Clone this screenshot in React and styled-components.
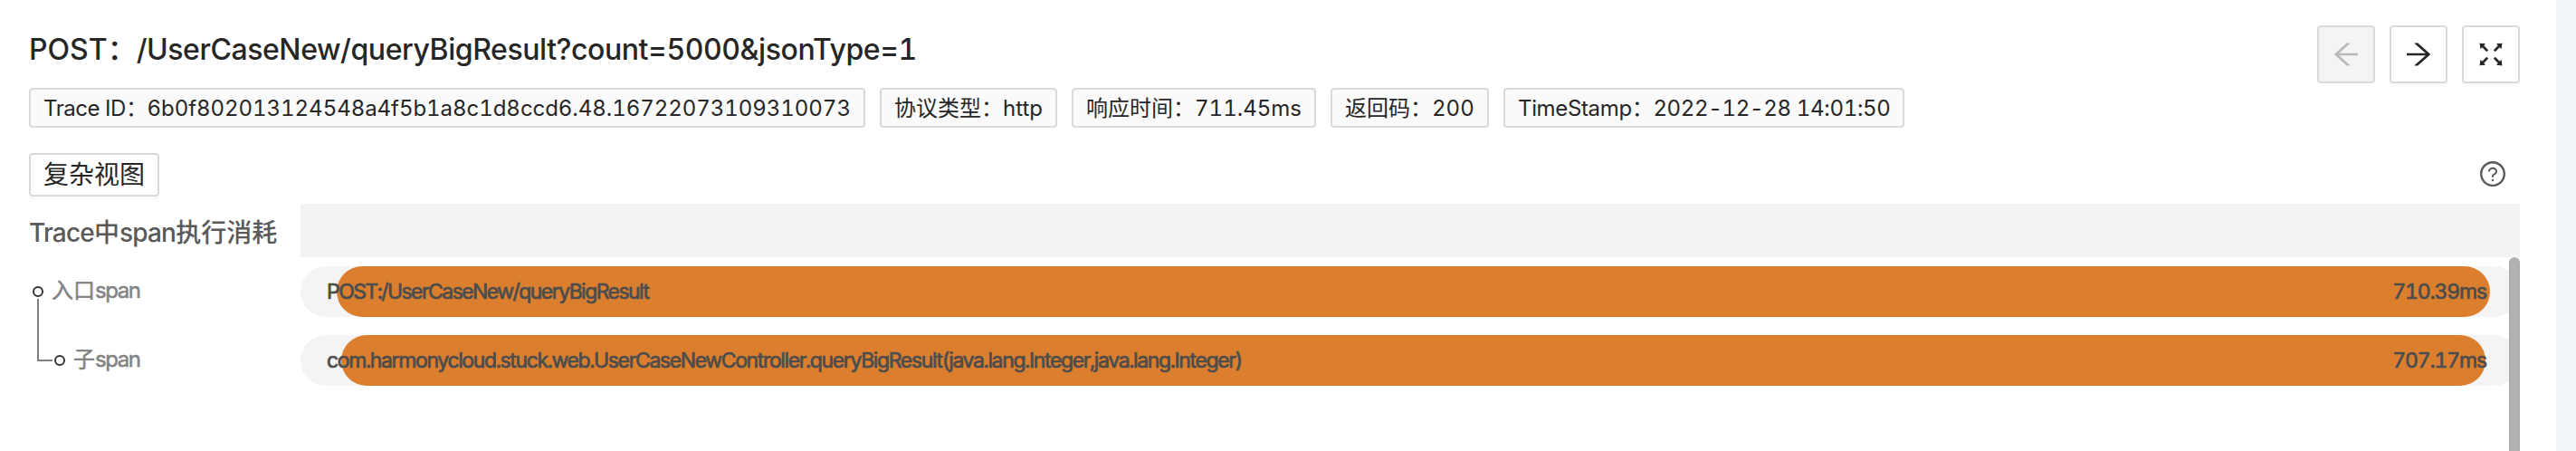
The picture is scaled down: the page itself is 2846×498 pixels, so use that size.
import React from 'react';
import styled, { createGlobalStyle } from 'styled-components';
import {
  AiOutlineArrowLeft,
  AiOutlineArrowRight,
  AiOutlineFullscreen,
  AiOutlineQuestionCircle,
} from 'react-icons/ai';

const GlobalStyle = createGlobalStyle`
  * { box-sizing: border-box; }
  body {
    margin: 0;
    background: #fff;
    color: #262626;
    font-family: Inter, "Noto Sans CJK SC", sans-serif;
    font-variant-numeric: tabular-nums;
  }
  button { font-family: inherit; color: inherit; }
`;

const Page = styled.div`
  display: flex;
  height: 498px;
  overflow: hidden;
  background: #f2f6fb;
  padding-right: 22px;
`;

const Panel = styled.main`
  flex: 1;
  min-width: 0;
  display: flex;
  flex-direction: column;
  background: #fff;
  padding: 28px 40px 0 32px;
`;

const Head = styled.header`
  display: flex;
  justify-content: space-between;
  align-items: flex-start;
  height: 113px;
`;

const Title = styled.h1`
  margin: 0 0 16px;
  font-size: 32px;
  line-height: 53px;
  font-weight: 500;
  white-space: nowrap;
`;

const Spaced = styled.span`
  letter-spacing: ${(p) => p.$tracking}px;
`;

const Tags = styled.div`
  display: flex;
  gap: 16px;
`;

const Tag = styled.div`
  height: 44px;
  width: ${(p) => p.$width}px;
  padding: 0 14px;
  border: 2px solid #d9d9d9;
  border-radius: 4px;
  background: #fafafa;
  font-size: 24px;
  line-height: 41px;
  white-space: nowrap;
`;

const Actions = styled.div`
  display: flex;
  gap: 16px;
`;

const IconButton = styled.button`
  display: flex;
  align-items: center;
  justify-content: center;
  width: 64px;
  height: 64px;
  padding: 0;
  border: 2px solid #d9d9d9;
  border-radius: 4px;
  background: #fff;
  box-shadow: 0 4px 0 rgba(0, 0, 0, 0.015);
  font-size: 36px;

  &:disabled {
    background: #f4f4f4;
    color: #b8b8b8;
    box-shadow: none;
  }
`;

const Toolbar = styled.div`
  display: flex;
  align-items: center;
  justify-content: space-between;
  margin-top: 28px;
  height: 48px;
  padding-right: 14px;
`;

const ViewButton = styled.button`
  width: 144px;
  height: 48px;
  padding: 1px 0 0;
  border: 2px solid #d9d9d9;
  border-radius: 4px;
  background: #fff;
  box-shadow: 0 4px 0 rgba(0, 0, 0, 0.015);
  font-size: 28px;
  line-height: 43px;
`;

const HelpIcon = styled(AiOutlineQuestionCircle)`
  width: 32px;
  height: 32px;
  margin-bottom: 2px;
  color: #595959;
`;

const TableHead = styled.div`
  display: grid;
  grid-template-columns: 300px 1fr;
  grid-template-rows: 59px;
  margin-top: 8px;
`;

const TreeHeading = styled.div`
  font-size: 28px;
  font-weight: 500;
  line-height: 65px;
  color: #595959;
  white-space: nowrap;
`;

const Ruler = styled.div`
  background: #f3f3f3;
`;

const TableBody = styled.div`
  position: relative;
  flex: 1;
  display: grid;
  grid-template-columns: 300px 1fr;
  padding-top: 10px;
`;

const Scrollbar = styled.div`
  position: absolute;
  top: 0;
  right: 0;
  bottom: -20px;
  width: 12px;
  border-radius: 6px;
  background: linear-gradient(90deg, #aaa 0, #b2b2b2 3px, #b2b2b2 9px, #aaa 100%);
`;

const Tree = styled.div`
  display: grid;
  grid-template-rows: 56px 56px;
  row-gap: 20px;
  align-content: start;
  padding-left: 4px;
`;

const TreeRow = styled.div`
  display: flex;
  align-items: center;
  gap: 9px;
`;

const Node = styled.span`
  flex: none;
  width: 12px;
  height: 12px;
  border: 2px solid #333;
  border-radius: 50%;
`;

const Elbow = styled.span`
  align-self: flex-start;
  width: 17px;
  height: 69px;
  margin: -40px -7px 0 5px;
  border-left: 2px solid #808080;
  border-bottom: 2px solid #808080;
`;

const NodeLabel = styled.span`
  padding-bottom: 3px;
  font-size: 24px;
  line-height: 32px;
  color: #828282;
  -webkit-text-stroke: 0.5px #828282;
  white-space: nowrap;
`;

const Bars = styled.div`
  display: grid;
  grid-template-rows: 56px 56px;
  row-gap: 20px;
  align-content: start;
`;

const Track = styled.div`
  display: grid;
  align-items: center;
  border-radius: 28px;
  background: #f4f4f4;
  overflow: hidden;

  > * { grid-area: 1 / 1; }
`;

const Fill = styled.div`
  height: 56px;
  border-radius: 28px;
  background: #db7f2f;
`;

const BarText = styled.div`
  display: flex;
  justify-content: space-between;
  padding: 1px 37px 0 29px;
  font-size: 23px;
  line-height: 55px;
  color: #4c4c4c;
  -webkit-text-stroke: 0.7px #4c4c4c;
  white-space: nowrap;
`;

const TAGS = [
  { label: 'Trace ID：', value: '6b0f802013124548a4f5b1a8c1d8ccd6.48.16722073109310073', width: 924, lt: -0.45, vt: -0.05 },
  { label: '协议类型：', value: 'http', width: 196, lt: 0, vt: 0 },
  { label: '响应时间：', value: '711.45ms', width: 270, lt: 0, vt: 0 },
  { label: '返回码：', value: '200', width: 175, lt: 0, vt: 0 },
  { label: 'TimeStamp：', value: '2022-12-28 14:01:50', width: 443, lt: -0.35, vt: -0.33 },
];

const SPANS = [
  {
    name: 'POST:/UserCaseNew/queryBigResult',
    time: '710.39ms',
    start: 1.62,
    length: 97.02,
    tracking: -1.56,
  },
  {
    name: 'com.harmonycloud.stuck.web.UserCaseNewController.queryBigResult(java.lang.Integer,java.lang.Integer)',
    time: '707.17ms',
    start: 1.835,
    length: 96.6,
    tracking: -1.37,
  },
];

export default function App() {
  return (
    <>
      <GlobalStyle />
      <Page>
        <Panel>
          <Head>
            <div>
              <Title>
                POST：<Spaced $tracking={-0.43}>/UserCaseNew/queryBigResult?count=5000&amp;jsonType=1</Spaced>
              </Title>
              <Tags>
                {TAGS.map((t) => (
                  <Tag key={t.label} $width={t.width}>
                    <Spaced $tracking={t.lt}>{t.label}</Spaced>
                    <Spaced $tracking={t.vt}>{t.value}</Spaced>
                  </Tag>
                ))}
              </Tags>
            </div>
            <Actions>
              <IconButton disabled aria-label="Previous"><AiOutlineArrowLeft /></IconButton>
              <IconButton aria-label="Next"><AiOutlineArrowRight /></IconButton>
              <IconButton aria-label="Fullscreen"><AiOutlineFullscreen /></IconButton>
            </Actions>
          </Head>

          <Toolbar>
            <ViewButton>复杂视图</ViewButton>
            <HelpIcon />
          </Toolbar>

          <TableHead>
            <TreeHeading>
              <Spaced $tracking={-0.8}>Trace</Spaced>中<Spaced $tracking={-0.8}>span</Spaced>执行消耗
            </TreeHeading>
            <Ruler />
          </TableHead>

          <TableBody>
            <Tree>
              <TreeRow>
                <Node />
                <NodeLabel>入口<Spaced $tracking={-1.4}>span</Spaced></NodeLabel>
              </TreeRow>
              <TreeRow>
                <Elbow />
                <Node />
                <NodeLabel>子<Spaced $tracking={-1.4}>span</Spaced></NodeLabel>
              </TreeRow>
            </Tree>
            <Bars>
              {SPANS.map((s) => (
                <Track key={s.name}>
                  <Fill style={{ marginLeft: `${s.start}%`, width: `${s.length}%` }} />
                  <BarText>
                    <Spaced $tracking={s.tracking}>{s.name}</Spaced>
                    <Spaced $tracking={-1.15}>{s.time}</Spaced>
                  </BarText>
                </Track>
              ))}
            </Bars>
            <Scrollbar />
          </TableBody>
        </Panel>
      </Page>
    </>
  );
}
